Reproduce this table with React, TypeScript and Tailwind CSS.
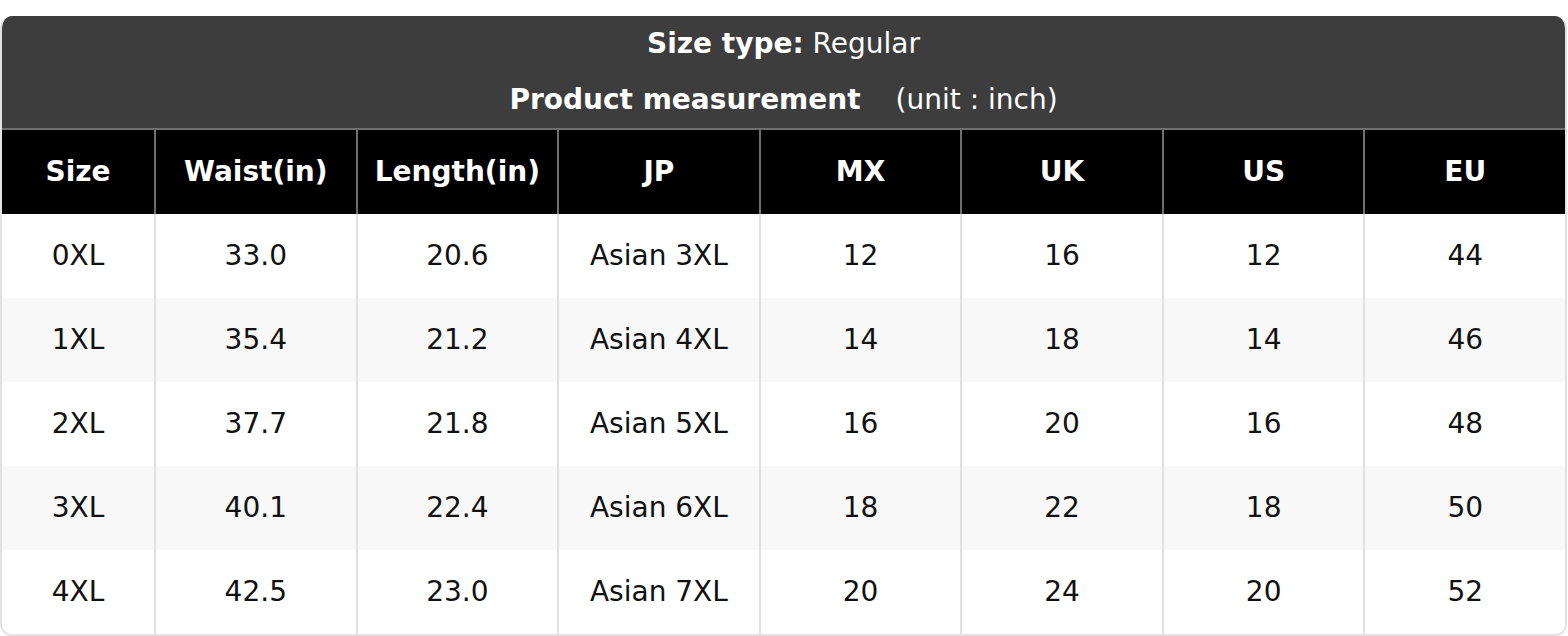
import React from 'react'

const columns = ['Size', 'Waist(in)', 'Length(in)', 'JP', 'MX', 'UK', 'US', 'EU']

const rows = [
  ['0XL', '33.0', '20.6', 'Asian 3XL', '12', '16', '12', '44'],
  ['1XL', '35.4', '21.2', 'Asian 4XL', '14', '18', '14', '46'],
  ['2XL', '37.7', '21.8', 'Asian 5XL', '16', '20', '16', '48'],
  ['3XL', '40.1', '22.4', 'Asian 6XL', '18', '22', '18', '50'],
  ['4XL', '42.5', '23.0', 'Asian 7XL', '20', '24', '20', '52'],
]

export default function App() {
  return (
    <div className="w-[1568px] pt-[16px] bg-white" style={{ fontFamily: '"DejaVu Sans", "Liberation Sans", sans-serif' }}>
      <div className="w-[1567px] rounded-[12px] overflow-hidden border-2 border-t-0 border-[#e2e2e2] bg-white">
        {/* Title block */}
        <div className="bg-[#3d3d3d] text-white text-[28px] text-center">
          <div className="h-[56px] leading-[56px]">
            <span className="font-bold">Size type:</span> Regular
          </div>
          <div className="h-[56px] leading-[56px]">
            <span className="font-bold">Product measurement</span>
            <span className="ml-[35px]">(unit : inch)</span>
          </div>
        </div>

        {/* Column headers */}
        <div className="grid grid-cols-[152px_repeat(7,1fr)] bg-black border-t-2 border-[#6f6f6f]">
          {columns.map((c, i) => (
            <div
              key={c}
              className={`h-[84px] flex items-center justify-center text-white font-bold text-[28px] ${
                i > 0 ? 'border-l-2 border-[#6f6f6f]' : ''
              }`}
            >
              {c}
            </div>
          ))}
        </div>

        {/* Body rows */}
        {rows.map((r, ri) => (
          <div
            key={r[0]}
            className={`grid grid-cols-[152px_repeat(7,1fr)] ${ri % 2 === 1 ? 'bg-[#f8f8f8]' : 'bg-white'}`}
          >
            {r.map((v, i) => (
              <div
                key={i}
                className={`h-[84px] flex items-center justify-center text-[#111] text-[28px] ${
                  i > 0 ? 'border-l-2 border-[#e0e0e0]' : ''
                }`}
              >
                {v}
              </div>
            ))}
          </div>
        ))}
      </div>
    </div>
  )
}
